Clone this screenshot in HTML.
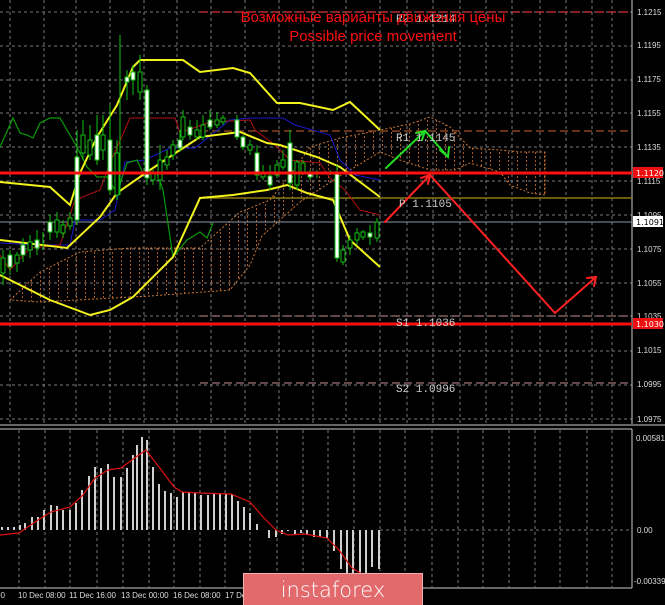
<!DOCTYPE html>
<html><head><meta charset="utf-8"><style>
html,body{margin:0;padding:0;background:#000;width:665px;height:605px;overflow:hidden}
svg{display:block}
text{font-family:"Liberation Sans",sans-serif}
.ax{font-family:"DejaVu Sans","Liberation Sans",sans-serif;font-size:8px;fill:#ddd}
.pv{font-family:"Liberation Mono","DejaVu Sans Mono",monospace;font-size:11px;fill:#ccc}
</style></head><body>
<svg width="665" height="605" viewBox="0 0 665 605" xmlns="http://www.w3.org/2000/svg">
<defs>
<pattern id="cl" width="9" height="4" patternUnits="userSpaceOnUse">
<rect x="4" y="0" width="1" height="2" fill="#a85a28"/>
</pattern>
</defs>
<rect width="665" height="605" fill="#000"/>
<g stroke="#7a7a7a" stroke-width="1" stroke-dasharray="3,3">
<path d="M0 12H632M0 46H632M0 80H632M0 113H632M0 147H632M0 181H632M0 215H632M0 249H632M0 283H632M0 316H632M0 351H632M0 385H632M0 419H632"/>
<path d="M10 0V424M44 0V424M76 0V424M110 0V424M144 0V424M177 0V424M211 0V424M245 0V424M279 0V424M313 0V424M346 0V424M380 0V424M407 0V424M433 0V424M460 0V424M486 0V424M512 0V424M540 0V424M566 0V424M592 0V424M612 0V424"/>
</g>
<path d="M632 0V424M0 425H665M0 429H632M632 429V588M0 588H632" stroke="#ccc" stroke-width="1" fill="none"/>
<g class="ax">
<text x="637" y="15">1.1215</text><text x="637" y="48">1.1195</text><text x="637" y="82">1.1175</text><text x="637" y="116">1.1155</text><text x="637" y="150">1.1135</text><text x="637" y="184">1.1115</text><text x="637" y="218">1.1095</text><text x="637" y="252">1.1075</text><text x="637" y="286">1.1055</text><text x="637" y="319">1.1035</text><text x="637" y="353">1.1015</text><text x="637" y="387">1.0995</text><text x="637" y="422">1.0975</text>
<text x="636" y="441">0.00581</text><text x="637" y="533">0.00</text><text x="634" y="584">-0.00339</text>
<text x="-4" y="598">00</text><text x="18" y="598">10 Dec 08:00</text><text x="69" y="598">11 Dec 16:00</text><text x="121" y="598">13 Dec 00:00</text><text x="173" y="598">16 Dec 08:00</text><text x="225" y="598">17 De</text>
</g>
<path d="M10 300L40 272L80 252L130 248L200 248L240 212L270 200L290 175L310 147L340 138L380 130L410 124L430 117L450 127L470 148L500 150L520 152L545 152L545 195L530 193L510 185L500 172L470 163L455 170L430 170L400 160L380 152L340 176L300 202L262 236L250 265L230 290L150 296L40 302Z" fill="url(#cl)" stroke="#c87533" stroke-width="1" stroke-dasharray="2,2"/>
<path d="M200 12H632" stroke="#d33" stroke-dasharray="8,4" stroke-width="1.3"/>
<path d="M200 131H632" stroke="#a0522d" stroke-dasharray="8,4" stroke-width="1.3"/>
<path d="M200 316H632M200 383H632" stroke="#a07070" stroke-dasharray="8,4" stroke-width="1.3"/>
<path d="M200 198H632" stroke="#8b7a10" stroke-width="1.5"/>
<path d="M0 222H632" stroke="#8a99aa" stroke-width="1"/>
<polyline fill="none" stroke="#1a1acc" stroke-width="1" points="0,243 40,245 70,245 75,220 100,220 115,210 125,162 145,160 170,148 195,148 230,120 250,118 283,118 295,125 330,135 340,160 355,175 380,180"/>
<polyline fill="none" stroke="#b01010" stroke-width="1" points="0,255 10,270 30,248 60,245 75,200 100,190 110,163 130,118 175,118 180,133 210,122 250,120 255,130 275,145 290,160 320,163 330,178 345,190 360,210 380,215"/>
<polyline fill="none" stroke="#0a9a0a" stroke-width="1.2" points="0,147 13,118 20,133 27,135 33,138 40,123 50,118 60,118 77,147 87,167 97,177 107,177 117,193 127,163 137,160 143,173 157,173 163,190 173,257 187,240 200,232 207,238 213,223"/>
<g fill="none" stroke="#f2f21c" stroke-width="2">
<polyline points="0,182 50,187 70,205 80,173 97,137 117,105 133,67 140,60 183,60 200,72 233,68 250,73 277,103 300,103 333,110 350,102 380,130"/>
<polyline points="0,240 67,248 100,217 117,193 150,170 177,152 200,137 240,132 267,143 280,145 317,157 340,167 380,197"/>
<polyline points="0,275 50,300 90,315 110,310 133,297 173,257 200,198 233,195 267,190 287,185 307,193 333,200 350,240 380,267"/>
</g>
<g stroke="#10c010" stroke-width="1">
<path d="M3 250V285M10 250V275M17 252V272M23 238V262M30 235V258M37 230V255M43 232V250M50 215V240M57 212V238M63 220V238M70 212V230M77 130V225M83 120V160M90 125V160M97 115V165M103 115V160M110 105V195M117 140V200M120 35V195M127 70V100M133 65V95M140 55V100M147 85V185M153 170V185M160 145V190M167 150V170M173 140V160M180 130V152M183 110V140M190 120V140M197 120V140M203 115V140M210 110V130M217 112V128M223 115V125M237 115V140M243 135V150M250 140V155M257 145V180M263 165V180M270 165V190M277 160V178M283 150V170M290 130V190M297 160V190M303 160V175M310 170V180M317 170V178M330 170V175M337 165V262M343 245V265M350 235V255M357 228V245M363 230V240M370 225V245M377 218V242"/>
<g fill="#fff">
<rect x="8" y="255" width="4" height="12"/><rect x="21" y="245" width="4" height="10"/><rect x="35" y="240" width="4" height="8"/><rect x="48" y="222" width="4" height="10"/><rect x="75" y="157" width="4" height="63"/><rect x="95" y="135" width="4" height="25"/><rect x="108" y="140" width="4" height="50"/><rect x="125" y="77" width="4" height="5"/><rect x="131" y="72" width="4" height="8"/><rect x="145" y="90" width="4" height="88"/><rect x="178" y="140" width="4" height="8"/><rect x="188" y="127" width="4" height="8"/><rect x="208" y="120" width="4" height="7"/><rect x="235" y="120" width="4" height="17"/><rect x="241" y="137" width="4" height="10"/><rect x="255" y="153" width="4" height="22"/><rect x="268" y="176" width="4" height="9"/><rect x="288" y="143" width="4" height="40"/><rect x="308" y="172" width="4" height="5"/><rect x="335" y="173" width="4" height="85"/><rect x="368" y="233" width="4" height="4"/></g>
<g fill="#000">
<rect x="1" y="258" width="4" height="15"/><rect x="15" y="255" width="4" height="8"/><rect x="28" y="242" width="4" height="8"/><rect x="55" y="220" width="4" height="12"/><rect x="61" y="225" width="4" height="8"/><rect x="68" y="218" width="4" height="8"/><rect x="81" y="135" width="4" height="18"/><rect x="88" y="140" width="4" height="15"/><rect x="101" y="135" width="4" height="15"/><rect x="115" y="153" width="4" height="42"/><rect x="138" y="72" width="4" height="20"/><rect x="151" y="173" width="4" height="7"/><rect x="158" y="160" width="4" height="20"/><rect x="165" y="157" width="4" height="8"/><rect x="171" y="145" width="4" height="10"/><rect x="181" y="117" width="4" height="20"/><rect x="195" y="130" width="4" height="7"/><rect x="201" y="125" width="4" height="12"/><rect x="215" y="120" width="4" height="5"/><rect x="221" y="118" width="4" height="4"/><rect x="248" y="145" width="4" height="5"/><rect x="261" y="173" width="4" height="4"/><rect x="275" y="165" width="4" height="10"/><rect x="281" y="160" width="4" height="7"/><rect x="295" y="162" width="4" height="23"/><rect x="301" y="163" width="4" height="9"/><rect x="341" y="250" width="4" height="12"/><rect x="348" y="240" width="4" height="8"/><rect x="355" y="233" width="4" height="7"/><rect x="361" y="232" width="4" height="5"/><rect x="375" y="222" width="4" height="16"/></g>
</g>
<path d="M0 173H632M0 324H632" stroke="#ff1010" stroke-width="3"/>
<rect x="633" y="167" width="30" height="11" fill="#ee1010"/><text x="636" y="176" class="ax" style="fill:#fff">1.1120</text>
<rect x="633" y="318" width="30" height="11" fill="#ee1010"/><text x="636" y="327" class="ax" style="fill:#fff">1.1030</text>
<rect x="633" y="216" width="30" height="11" fill="#fff"/><text x="636" y="225" class="ax" style="fill:#000">1.1091</text>
<g fill="none" stroke-width="2" stroke-linecap="round">
<path d="M386 168L425 131L448 157" stroke="#22dd22"/>
<path d="M440 150L448 157L449 147M416 133L425 131L422 140" stroke="#22dd22"/>
<path d="M385 222L430 175L555 313L596 277" stroke="#ff2020"/>
<path d="M421 178L430 175L428 184M587 278L596 277L594 286" stroke="#ff2020"/>
</g>
<text x="396" y="22" class="pv">R2 1.1214</text>
<text x="396" y="141" class="pv">R1 1.1145</text>
<text x="399" y="207" class="pv">P 1.1105</text>
<text x="396" y="326" class="pv">S1 1.1036</text>
<text x="396" y="392" class="pv">S2 1.0996</text>
<text x="373" y="22" text-anchor="middle" font-size="15" fill="#ff1010">Возможные варианты движения цены</text>
<text x="373" y="41" text-anchor="middle" font-size="15" fill="#ff1010">Possible price movement</text>
<g stroke="#7a7a7a" stroke-dasharray="3,3">
<path d="M19 430V588M45 430V588M70 430V588M97 430V588M123 430V588M149 430V588M174 430V588M200 430V588M225 430V588M250 430V588M277 430V588M303 430V588M328 430V588M354 430V588M380 430V588M405 430V588M432 430V588M458 430V588M483 430V588M509 430V588M535 430V588M560 430V588M587 430V588M612 430V588"/>
<path d="M380 530H632"/>
</g>
<g stroke="#cfcfcf" stroke-width="2">
<path d="M2 530V527M8 530V527M14 530V527M20 530V525M25 530V523M32 530V517M38 530V517M44 530V510M51 530V505M57 530V506M63 530V510M70 530V510M76 530V503M82 530V490M89 530V476M95 530V467M101 530V468M108 530V464M114 530V477M121 530V477M127 530V468M133 530V455M137 530V445M142 530V437M147 530V440M153 530V467M159 530V484M165 530V491M171 530V493M177 530V497M183 530V492M189 530V493M195 530V493M201 530V495M208 530V495M214 530V493M220 530V493M226 530V494M232 530V494M238 530V501M244 530V507M250 530V513M257 530V524M263 530V530M269 530V538M276 530V537M282 530V534M288 530V531M295 530V535M301 530V533M307 530V535M314 530V537M320 530V537M327 530V538M334 530V551M341 530V569M347 530V577M353 530V577M360 530V577M366 530V577M372 530V567M379 530V569"/>
</g>
<polyline fill="none" stroke="#dd1010" stroke-width="1.2" points="0,535 19,533 38,520 51,512 70,507 83,495 95,478 108,470 121,468 136,457 146,450 159,467 174,487 182,492 199,493 231,494 250,502 263,517 276,530 288,535 305,534 327,538 339,550 352,568 362,574"/>
<rect x="243.5" y="573.5" width="179" height="32" fill="#e26a6c" stroke="#f4b0b0" stroke-width="1"/>
<text x="333" y="597" text-anchor="middle" font-size="21" fill="#fff" style="font-family:'DejaVu Sans','Liberation Sans',sans-serif;font-weight:300">instaforex</text>
</svg>
</body></html>
